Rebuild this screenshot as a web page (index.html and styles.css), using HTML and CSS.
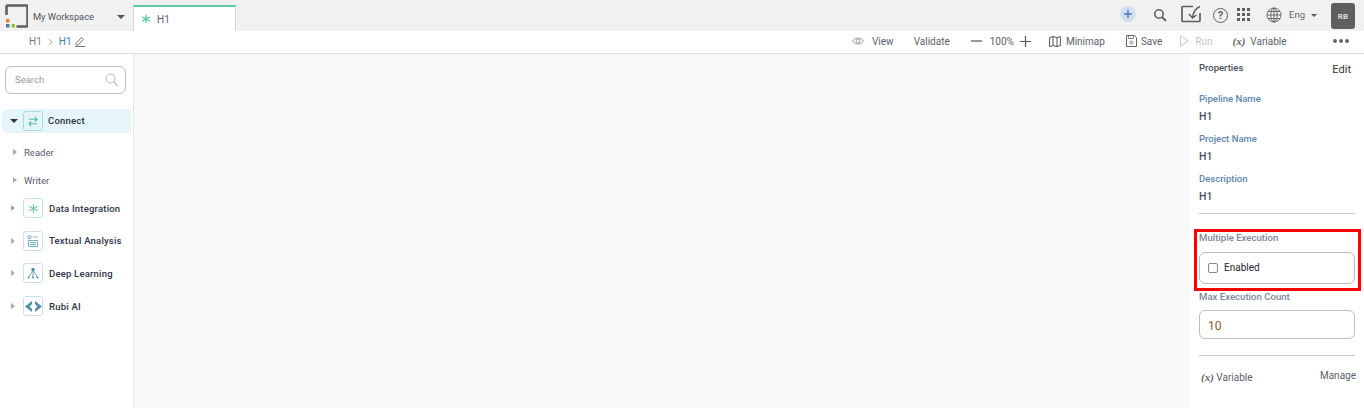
FILE: index.html
```html
<!DOCTYPE html>
<html lang="en">
<head>
<meta charset="utf-8">
<title>H1</title>
<link rel="stylesheet" href="styles.css">
</head>
<body>
<header class="topbar">
  <div class="brand">
    <svg class="logo" width="26" height="26" viewBox="0 0 26 26"><path d="M4.500 14V5.500a1 1 0 0 1 1-1h19a1 1 0 0 1 1 1v19a1 1 0 0 1-1 1H14.500" fill="none" stroke="#5f5f5f" stroke-width="2.600" transform="translate(0 -1)"/><rect x="4" y="17" width="3.500" height="3.500" fill="#e9823a"/><rect x="4" y="22" width="3.500" height="3.500" fill="#4a76b8"/><rect x="9.500" y="22" width="3.500" height="3.500" fill="#9cc32f"/></svg>
    <span class="workspace">My Workspace</span>
    <span class="caret-down wcaret"></span>
  </div>
  <div class="tab">
    <svg class="star" width="10" height="10" viewBox="0 0 12 12"><path d="M6 1v10M1.500 3.500l9 5M1.500 8.500l9-5" stroke="#63c7a2" stroke-width="1.500" fill="none"/></svg>
    <span>H1</span>
  </div>
  <div class="topicons">
    <span class="plus"><svg width="10" height="10" viewBox="0 0 10 10"><path d="M5 1v8M1 5h8" stroke="#4a76b8" stroke-width="1.400"/></svg></span>
    <svg class="i-search" width="14" height="14" viewBox="0 0 14 14"><circle cx="6" cy="6" r="4.200" fill="none" stroke="#5f5f5f" stroke-width="1.600"/><path d="M9 9l4 4" stroke="#5f5f5f" stroke-width="1.800"/></svg>
    <svg class="i-task" width="20" height="18" viewBox="0 0 20 18"><path d="M12 1.500H2a1 1 0 0 0-1 1v13a1 1 0 0 0 1 1h16a1 1 0 0 0 1-1V8" fill="none" stroke="#5f5f5f" stroke-width="1.700"/><path d="M19 1.500C15 3 12.500 6 11.500 12.500M8 9l3.500 4 4-3" fill="none" stroke="#5f5f5f" stroke-width="1.500"/></svg>
    <span class="i-help">?</span>
    <span class="i-grid"><i></i><i></i><i></i><i></i><i></i><i></i><i></i><i></i><i></i></span>
    <svg class="i-globe" width="16" height="16" viewBox="0 0 16 16"><g fill="none" stroke="#5f5f5f" stroke-width="0.900"><circle cx="8" cy="8" r="7"/><ellipse cx="8" cy="8" rx="3.200" ry="7"/><path d="M8 1v14M1 8h14M2 4.500h12M2 11.500h12"/></g></svg>
    <span class="lang">Eng</span>
    <span class="caret-down lcaret"></span>
    <span class="avatar">RB</span>
  </div>
</header>

<div class="toolbar">
  <nav class="crumbs">
    <span>H1</span>
    <svg class="sep" width="5" height="8" viewBox="0 0 5 8"><path d="M1 1l3 3-3 3" fill="none" stroke="#aaa"/></svg>
    <span class="current">H1</span>
    <svg class="pencil" width="10" height="11" viewBox="0 0 10 11"><path d="M1 7.500L6.500 1.500l2 1.800L3 9H1zM0 10.500h10" fill="none" stroke="#666" stroke-width="0.900"/></svg>
  </nav>
  <div class="actions">
    <svg class="a-eye" width="12" height="8" viewBox="0 0 12 8"><path d="M.5 4C3.500 0 8.500 0 11.500 4 8.500 8 3.500 8 .5 4z" fill="none" stroke="#888" stroke-width=".8"/><circle cx="6" cy="4" r="2" fill="none" stroke="#888" stroke-width=".8"/></svg>
    <span class="a-view">View</span>
    <span class="a-validate">Validate</span>
    <svg class="a-minus" width="11" height="2" viewBox="0 0 11 2"><path d="M0 1h11" stroke="#555" stroke-width="1.200"/></svg>
    <span class="a-zoom">100%</span>
    <svg class="a-plus" width="11" height="11" viewBox="0 0 11 11"><path d="M5.500 0v11M0 5.500h11" stroke="#555" stroke-width="1.200"/></svg>
    <svg class="a-map" width="12" height="11" viewBox="0 0 12 11"><path d="M.6 1.500L4 .6l4 .9 3.400-.9v9l-3.400.9-4-.9-3.400.9zM4 .6v9M8 1.500v9" fill="none" stroke="#555" stroke-width="1"/></svg>
    <span class="a-minimap">Minimap</span>
    <svg class="a-save" width="11" height="12" viewBox="0 0 11 12"><path d="M.5.500h8l2 2v9H.5z" fill="none" stroke="#666"/><path d="M2.500.500v3h5v-3" fill="none" stroke="#666" stroke-width=".8"/><circle cx="5.500" cy="7.500" r="1.500" fill="none" stroke="#666" stroke-width=".8"/></svg>
    <span class="a-savetxt">Save</span>
    <svg class="a-run" width="9" height="12" viewBox="0 0 9 12"><path d="M.6.800L8.200 6 .6 11.200z" fill="none" stroke="#c8c8c8"/></svg>
    <span class="a-runtxt">Run</span>
    <span class="fx a-fx">(x)</span>
    <span class="a-var">Variable</span>
    <span class="a-more"><i></i><i></i><i></i></span>
  </div>
</div>

<main class="workspace-area">
  <aside class="sidebar">
    <div class="search">
      <span>Search</span>
      <svg width="13" height="14" viewBox="0 0 13 14"><circle cx="5.500" cy="5.500" r="4.500" fill="none" stroke="#b5b5b5"/><path d="M9 9l3.500 4" stroke="#888"/></svg>
    </div>
    <div class="cat active">
      <span class="caret-down ccaret"></span>
      <span class="ic teal">
        <svg width="12" height="11" viewBox="0 0 13 12"><path d="M2 3.500h9M8.500 1l2.500 2.500L8.500 6M11 8.500H2M4.500 6L2 8.500 4.500 11" fill="none" stroke="#4cbcb4" stroke-width="1.200"/></svg>
      </span>
      <span class="name">Connect</span>
    </div>
    <div class="sub first"><span class="caret-right"></span><span>Reader</span></div>
    <div class="sub second"><span class="caret-right"></span><span>Writer</span></div>
    <div class="cat di">
      <span class="caret-right"></span>
      <span class="ic green"><svg width="11" height="11" viewBox="0 0 12 12"><path d="M6 1v10M1.500 3.500l9 5M1.500 8.500l9-5" stroke="#63c7a2" stroke-width="1.100" fill="none"/></svg></span>
      <span class="name">Data Integration</span>
    </div>
    <div class="cat next">
      <span class="caret-right"></span>
      <span class="ic blue"><svg width="12" height="12" viewBox="0 0 12 12"><path d="M1 1h3v2.500H1zM6 2h5M1.500 5.500h9v6h-9zM3 7.500h6M3 9.500h6" fill="none" stroke="#5b9fb5" stroke-width=".8"/></svg></span>
      <span class="name">Textual Analysis</span>
    </div>
    <div class="cat next">
      <span class="caret-right"></span>
      <span class="ic blue"><svg width="12" height="12" viewBox="0 0 12 12"><circle cx="6" cy="2.500" r="1.700" fill="#4f8fa6"/><path d="M6 3L1.500 10.500M6 3v7.500M6 3l4.500 7.500" fill="none" stroke="#4f8fa6" stroke-width=".8"/><circle cx="1.500" cy="10.500" r="1" fill="#4f8fa6"/><circle cx="6" cy="10.500" r="1" fill="#4f8fa6"/><circle cx="10.500" cy="10.500" r="1" fill="#4f8fa6"/></svg></span>
      <span class="name">Deep Learning</span>
    </div>
    <div class="cat next">
      <span class="caret-right"></span>
      <span class="ic blue"><svg width="17" height="11" viewBox="0 0 17 11"><path d="M7 0L0 5.500 7 11V8L4.500 5.500 7 3zM10 0l7 5.500L10 11V8l2.500-2.500L10 3z" fill="#4f8fa6"/></svg></span>
      <span class="name">Rubi AI</span>
    </div>
  </aside>

  <section class="canvas"></section>

  <aside class="panel">
    <div class="panel-head"><span class="title">Properties</span><span class="edit">Edit</span></div>
    <div class="label p1">Pipeline Name</div>
    <div class="value">H1</div>
    <div class="label p2">Project Name</div>
    <div class="value">H1</div>
    <div class="label p2">Description</div>
    <div class="value">H1</div>
    <hr class="rule r1">
    <div class="label grey m1">Multiple Execution</div>
    <div class="box check"><span class="checkbox"></span><span>Enabled</span></div>
    <div class="label grey m2">Max Execution Count</div>
    <div class="box count">10</div>
    <hr class="rule r2">
    <div class="foot">
      <span class="varlabel"><span class="fx">(x)</span> Variable</span>
      <span class="manage">Manage</span>
    </div>
    <div class="highlight"></div>
  </aside>
</main>
</body>
</html>
```

FILE: styles.css
```css
* { box-sizing: border-box; }
html, body { margin: 0; height: 100%; }
body {
  width: 1364px;
  height: 408px;
  overflow: hidden;
  background: #fff;
  color: #4a4f5c;
  font-family: Roboto, "Liberation Sans", sans-serif;
  font-size: 10px;
  display: flex;
  flex-direction: column;
}
svg { display: block; flex: none; }

.caret-down { width: 0; height: 0; border-left: 4px solid transparent; border-right: 4px solid transparent; border-top: 4px solid #555; flex: none; }
.caret-right { width: 0; height: 0; border-top: 3.500px solid transparent; border-bottom: 3.500px solid transparent; border-left: 4px solid #aaa; flex: none; }

/* top bar */
.topbar { height: 31px; background: #f1f1f1; display: flex; align-items: flex-start; flex: none; }
.brand { width: 133px; height: 31px; display: flex; align-items: center; flex: none; }
.logo { margin-left: 2px; margin-top: -1px; }
.workspace { margin-left: 5px; font-weight: 400; color: #4f5463; width: 84px; margin-top: 2px; font-size: 9.300px; }
.wcaret { margin-top: 2px; }
.tab {
  width: 103px; height: 26px; margin-top: 5px;
  background: #fff;
  border-top: 2.500px solid #62c6a4;
  border-left: 1px solid #cfdadd;
  border-right: 1px solid #cfdadd;
  display: flex; align-items: center;
  padding-left: 7px;
  font-size: 10px; color: #5b6070;
}
.tab span { margin-left: 6px; }
.topicons { flex: 1; display: flex; align-items: center; height: 30px; }
.plus { margin-left: 884px; width: 16px; height: 16px; border-radius: 50%; background: #d3dff1; display: flex; align-items: center; justify-content: center; margin-top: -2px; }
.i-search { margin-left: 17px; }
.i-task { margin-left: 14px; margin-top: -2px; }
.i-help { margin-left: 12px; width: 15px; height: 15px; border: 1.500px solid #5f5f5f; border-radius: 50%; font-size: 11px; font-weight: 700; color: #5f5f5f; display: flex; align-items: center; justify-content: center; }
.i-grid { margin-left: 9px; margin-top: -2px; display: grid; grid-template-columns: repeat(3, 3px); grid-auto-rows: 3px; gap: 2px; }
.i-grid i { background: #5f5f5f; }
.i-globe { margin-left: 16px; }
.lang { margin-left: 7px; color: #666; margin-top: -2px; font-size: 9.500px; }
.lcaret { margin-left: 6px; border-left-width: 3px; border-right-width: 3px; border-top-width: 3px; }
.avatar { margin-left: 14px; width: 24px; height: 26px; border-radius: 3px; background: #5f5f5f; color: #ddd; font-size: 8px; font-weight: 700; display: flex; align-items: center; justify-content: center; margin-top: 2px; }

/* toolbar */
.toolbar { height: 23px; flex: none; border-bottom: 1px solid #dcdcdc; display: flex; align-items: center; background: #fff; padding-bottom: 2px; }
.crumbs { width: 133px; padding: 1px 0 0 29px; display: flex; align-items: center; flex: none; color: #777; }
.sep { margin-left: 6px; }
.current { margin-left: 6px; color: #3f7fa8; }
.pencil { margin-left: 3px; }
.actions { flex: 1; display: flex; align-items: center; color: #5a5f6b; font-weight: 400; font-size: 10px; }
.a-eye { margin-left: 719px; }
.a-view { margin-left: 8px; }
.a-validate { margin-left: 20px; }
.a-minus { margin-left: 21px; }
.a-zoom { margin-left: 8px; }
.a-plus { margin-left: 6px; }
.a-map { margin-left: 18px; }
.a-minimap { margin-left: 5px; }
.a-save { margin-left: 21px; }
.a-savetxt { margin-left: 4px; }
.a-run { margin-left: 18px; }
.a-runtxt { margin-left: 6px; color: #c4c4c4; }
.fx { font-family: "Liberation Serif", serif; font-style: italic; font-weight: 700; color: #666; font-size: 11px; }
.a-fx { margin-left: 20px; }
.a-var { margin-left: 5px; }
.a-more { margin-left: 46px; display: flex; gap: 2px; }
.a-more i { width: 4px; height: 4px; border-radius: 50%; background: #666; }

/* main */
.workspace-area { flex: 1; display: flex; min-height: 0; }
.sidebar { width: 134px; flex: none; border-right: 1px solid #e6e6e6; padding-top: 12px; }
.search {
  margin-left: 5px; width: 121px; height: 28px;
  border: 1px solid #bdbdbd; border-radius: 6px;
  display: flex; align-items: center; justify-content: space-between;
  padding: 0 7px 1px 9px;
  color: #999;
  font-size: 9.500px;
}
.cat { display: flex; align-items: center; font-weight: 500; color: #2f3546; font-size: 9.500px; letter-spacing: .2px; }
.cat.active { margin: 15px 2px 0 2px; height: 24px; background: #e5f5fa; border-radius: 6px 0 0 6px; padding-left: 8px; }
.ccaret { border-top-color: #333; }
.ic { width: 20px; height: 20px; border-radius: 3px; display: flex; align-items: center; justify-content: center; border: 1px solid; flex: none; }
.teal { border-color: #a6dedb; margin-left: 5px; }
.green { border-color: #bfe8d6; }
.blue { border-color: #c9e0e8; }
.name { margin-left: 6px; }
.cat.active .name { margin: -2px 0 0 5px; }
.sub { display: flex; align-items: center; padding-left: 13px; color: #565b6b; font-size: 9.500px; height: 14px; }
.sub span:last-child { margin-left: 7px; }
.sub.first { margin-top: 12px; }
.sub.second { margin-top: 14px; }
.cat.di { margin-top: 10px; padding-left: 11px; height: 22px; }
.cat.next { margin-top: 10.700px; padding-left: 11px; height: 22px; }
.cat.di .ic, .cat.next .ic { margin-left: 8px; }

.canvas { flex: 1; background: #f8f8f8; }

/* panel */
.panel { width: 175px; flex: none; padding: 0 9px 0 10px; position: relative; background: #fff; }
.panel-head { display: flex; justify-content: space-between; align-items: flex-start; padding-top: 8px; height: 28px; }
.title { font-weight: 500; color: #4a4f5c; font-size: 9.500px; }
.edit { font-size: 11px; color: #333; margin: 1px 4px 0 0; }
.label { font-weight: 500; font-size: 9.500px; color: #5d86ad; height: 12px; line-height: 12px; }
.label.p1 { margin-top: 11px; }
.label.p2 { margin-top: 10px; }
.value { font-weight: 500; font-size: 10.500px; color: #4a4f5c; margin-top: 6px; height: 12px; line-height: 12px; }
.rule { border: 0; border-top: 1px solid #c9c9c9; margin: 0; }
.r1 { margin-top: 10px; }
.label.grey { color: #7c8699; font-size: 9.600px; }
.m1 { margin-top: 18px; }
.box { border: 1px solid #bdbdbd; border-radius: 6px; display: flex; align-items: center; }
.check { height: 32px; margin-top: 8px; padding: 0 0 1px 8px; font-weight: 400; color: #1f2430; font-size: 10px; }
.checkbox { width: 10px; height: 10px; border: 1px solid #888; border-radius: 2px; margin-right: 6px; }
.m2 { margin-top: 7px; }
.count { height: 29px; margin-top: 7px; padding: 2px 0 0 8px; font-size: 12px; color: #8a5a2b; }
.r2 { margin-top: 16px; }
.foot { display: flex; justify-content: space-between; padding: 14px 0 0 2px; align-items: flex-start; font-weight: 400; color: #5a5f6b; }
.varlabel { margin-top: 1px; }
.manage { margin-right: -1px; margin-top: 0; }
.highlight { position: absolute; left: 5px; top: 175px; width: 167px; height: 62px; border: 3px solid #f00; pointer-events: none; }
```
